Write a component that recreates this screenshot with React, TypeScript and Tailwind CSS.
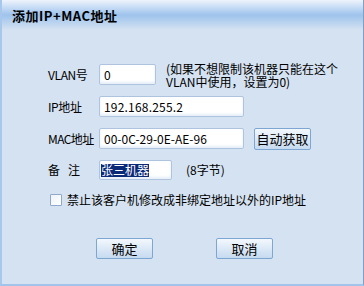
export default function App() {
  const font = { fontFamily: '"Noto Sans CJK SC", "Noto Sans", sans-serif' };

  return (
    <div
      className="flex h-[286px] w-[364px] flex-col border-b-2 border-l-2 border-r border-b-[#a3c3ea] border-l-[#a8c7ec] border-r-[#7f9fc4] bg-[#d5e2f1] text-[12px] leading-none text-black"
      style={font}
    >
      {/* title bar */}
      <div className="flex h-[30px] shrink-0 items-center bg-gradient-to-b from-[#eef4fc] via-[#9ec3ec] to-[#d5e2f1] pl-[10px]">
        <span className="text-[13px] font-bold tracking-[0.5px]">添加IP+MAC地址</span>
      </div>

      <div className="flex flex-col pl-[46px] pt-[34px]">
        {/* VLAN */}
        <div className="flex h-[21px] items-center">
          <span className="w-[51px] tracking-[-0.4px]">VLAN号</span>
          <div className="flex h-[21px] w-[57px] items-center rounded-[2px] border border-[#aec4de] bg-white pl-[4px] shadow-[inset_0_-2px_3px_#e6eef8]">
            0
          </div>
          <p className="ml-[10px] leading-[13px]">
            (如果不想限制该机器只能在这个
            <br />
            VLAN中使用，设置为0)
          </p>
        </div>

        {/* IP */}
        <div className="mt-[11px] flex h-[21px] items-center">
          <span className="w-[51px] tracking-[-0.4px]">IP地址</span>
          <div className="flex h-[21px] w-[145px] items-center rounded-[2px] border border-[#aec4de] bg-white pl-[4px] tracking-[0.2px] shadow-[inset_0_-2px_3px_#e6eef8]">
            192.168.255.2
          </div>
        </div>

        {/* MAC */}
        <div className="mt-[11px] flex h-[21px] items-center">
          <span className="w-[51px] tracking-[-0.6px]">MAC地址</span>
          <div className="flex h-[21px] w-[145px] items-center rounded-[2px] border border-[#aec4de] bg-white pl-[4px] shadow-[inset_0_-2px_3px_#e6eef8]">
            00-0C-29-0E-AE-96
          </div>
          <button className="ml-[10px] flex h-[22px] w-[57px] items-center justify-center rounded-[2px] border border-[#7ea6d2] bg-gradient-to-b from-[#f3f8fd] via-[#dce9f6] to-[#c6daef] text-[13px]">
            自动获取
          </button>
        </div>

        {/* remark */}
        <div className="mt-[11px] flex h-[20px] items-center">
          <span className="w-[51px]">备&nbsp;&nbsp;&nbsp;注</span>
          <div className="flex h-[20px] w-[73px] items-center rounded-[2px] border border-[#aec4de] bg-white pl-[1px] shadow-[inset_0_-2px_3px_#e6eef8]">
            <span className="flex h-[13px] items-center bg-[#0b2a78] text-white">张三机器</span>
          </div>
          <span className="ml-[14px]">(8字节)</span>
        </div>

        {/* checkbox */}
        <div className="mt-[13px] flex h-[14px] items-center">
          <div className="ml-[2px] h-[12px] w-[12px] rounded-[1px] border border-[#8fa9c8] bg-gradient-to-br from-[#eef2f7] to-white" />
          <span className="ml-[5px]">禁止该客户机修改成非绑定地址以外的IP地址</span>
        </div>
      </div>

      {/* buttons */}
      <div className="mt-[31px] flex gap-[63px] pl-[94px]">
        <button className="flex h-[21px] w-[57px] items-center justify-center rounded-[2px] border border-[#7ea6d2] bg-gradient-to-b from-[#f3f8fd] via-[#dce9f6] to-[#c6daef] text-[13px]">
          确定
        </button>
        <button className="flex h-[21px] w-[57px] items-center justify-center rounded-[2px] border border-[#7ea6d2] bg-gradient-to-b from-[#f3f8fd] via-[#dce9f6] to-[#c6daef] text-[13px]">
          取消
        </button>
      </div>
    </div>
  );
}
